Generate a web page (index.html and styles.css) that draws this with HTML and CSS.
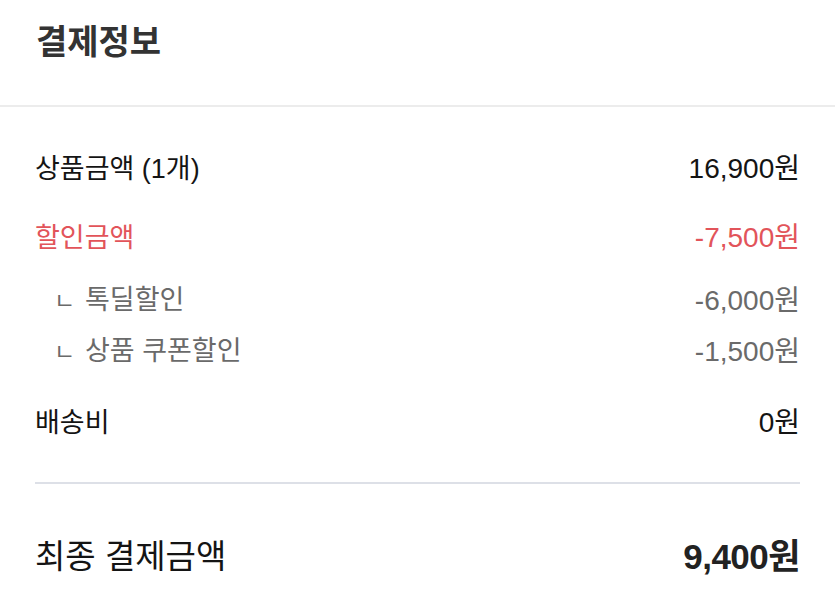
FILE: index.html
```html
<!DOCTYPE html>
<html lang="ko">
<head>
<meta charset="utf-8">
<link rel="stylesheet" href="styles.css">
</head>
<body>
<div class="page">
  <header class="head">
    <h1 class="title">결제정보</h1>
  </header>
  <section class="list">
    <div class="row">
      <span class="label">상품금액 (1개)</span>
      <span class="value">16,900원</span>
    </div>
    <div class="row red">
      <span class="label">할인금액</span>
      <span class="value">-7,500원</span>
    </div>
    <div class="subs">
      <div class="row sub">
        <span class="label"><span class="mark">ㄴ</span>톡딜할인</span>
        <span class="value">-6,000원</span>
      </div>
      <div class="row sub">
        <span class="label"><span class="mark">ㄴ</span>상품 쿠폰할인</span>
        <span class="value">-1,500원</span>
      </div>
    </div>
    <div class="row ship">
      <span class="label">배송비</span>
      <span class="value">0원</span>
    </div>
    <hr class="line">
    <div class="row total">
      <span class="label">최종 결제금액</span>
      <span class="value">9,400원</span>
    </div>
  </section>
</div>
</body>
</html>
```

FILE: styles.css
```css
* { box-sizing: border-box; }
html, body {
  margin: 0;
  padding: 0;
  background: #ffffff;
}
body {
  font-family: "Liberation Sans", "Noto Sans CJK KR", sans-serif;
  color: #141414;
}
.page {
  width: 835px;
  height: 616px;
  overflow: hidden;
}
.head {
  height: 107px;
  padding: 18px 36px 0;
  border-bottom: 2px solid #ececec;
}
.title {
  margin: 0;
  font-size: 34px;
  line-height: 48px;
  font-weight: 700;
  color: #333333;
  letter-spacing: 0;
}
.list {
  padding: 45px 35px 0 35px;
  display: flex;
  flex-direction: column;
}
.row {
  display: flex;
  justify-content: space-between;
  align-items: center;
  font-size: 27px;
  line-height: 34px;
}
.row .value {
  font-size: 28px;
}
.red {
  margin-top: 35px;
  color: #e2545a;
}
.subs {
  margin-top: 28px;
  display: flex;
  flex-direction: column;
  gap: 16px;
}
.sub {
  color: #6a6a6a;
  padding-left: 19px;
}
.mark {
  display: inline-block;
  font-size: 23px;
  width: 31px;
  vertical-align: baseline;
}
.ship {
  margin-top: 37px;
}
.line {
  margin: 42px 0 0;
  border: 0;
  height: 2px;
  background: #dde0e7;
}
.total {
  margin-top: 53px;
  font-size: 33px;
  line-height: 40px;
}
.total .value {
  font-weight: 700;
  font-size: 35px;
  color: #222222;
  letter-spacing: -0.5px;
}
```
